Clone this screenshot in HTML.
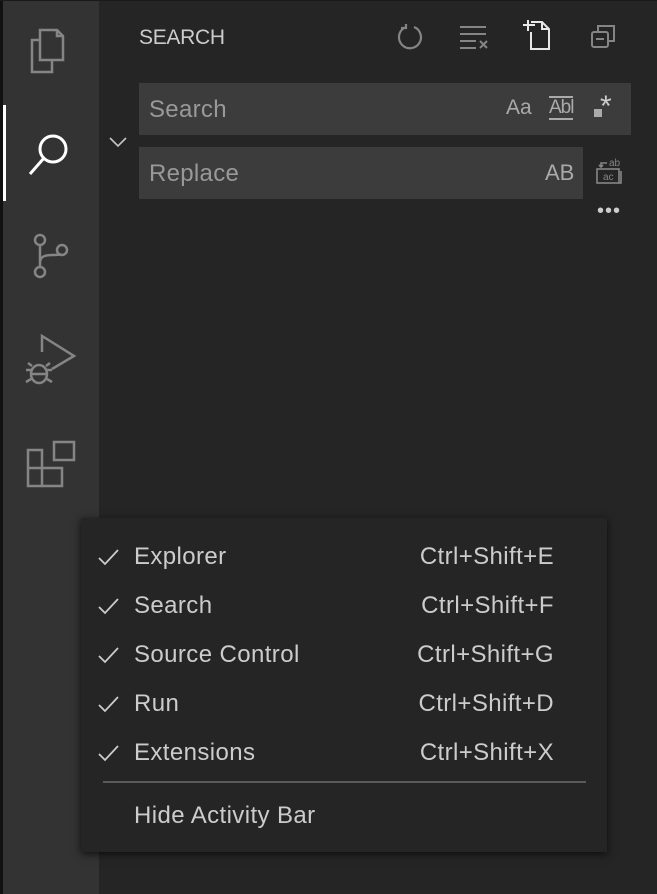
<!DOCTYPE html>
<html><head><meta charset="utf-8"><style>
*{margin:0;padding:0;box-sizing:border-box}
body{width:657px;height:894px;background:#252526;position:relative;overflow:hidden;font-family:"Liberation Sans",sans-serif;color:#ccc}
.ab{position:absolute;left:3px;top:0;width:96px;height:894px;background:#333}
.lb{position:absolute;left:0;top:0;width:3px;height:894px;background:#111}
.tb{position:absolute;left:0;top:0;width:657px;height:1px;background:#1a1a1a}
.ind{position:absolute;left:3px;top:105px;width:3px;height:96px;background:#fff}
svg{position:absolute}
.t{position:absolute;white-space:nowrap}
.box{position:absolute;background:#3c3c3c}
.menu{position:absolute;left:81px;top:518px;width:526px;height:334px;background:#252526;box-shadow:0 2px 8px rgba(0,0,0,.7)}
.it{position:absolute;left:0;width:526px;height:30px;font-size:24px;color:#ccc;letter-spacing:0.4px}
.it .l{position:absolute;left:53px;top:1px}
.it .r{position:absolute;right:53px;top:1px}
.it svg{left:16px;top:5px}
</style></head><body>
<div class="ab"></div><div class="lb"></div><div class="tb"></div><div class="ind"></div>
<svg width="60" height="60" style="left:22px;top:20px" fill="none" stroke="#858585" stroke-width="2.5"><path d="M18 10h17l6 6v24H18z M35 10v6h6"/><path d="M18 20h-8v32h20v-12"/></svg>
<svg width="60" height="60" style="left:22px;top:122px" fill="none" stroke="#fff" stroke-width="3"><circle cx="31" cy="27" r="13"/><path d="M22 36L8 52"/></svg>
<svg width="60" height="60" style="left:22px;top:228px" fill="none" stroke="#858585" stroke-width="2.5"><circle cx="18" cy="12" r="5"/><circle cx="18" cy="44" r="5"/><circle cx="40" cy="22" r="5"/><path d="M18 17v22M18 35c0-6 4-8 12-8 6 0 8-1 10-0"/></svg>
<svg width="60" height="60" style="left:22px;top:332px" fill="none" stroke="#858585" stroke-width="2.5"><path d="M20 20V4l32 20-22 13"/><ellipse cx="17" cy="42" rx="8" ry="9"/><path d="M9 42h16M4 38h5M25 38h5M4 50l5-3M30 50l-5-3M10 34l-4-3M24 34l4-3"/></svg>
<svg width="60" height="60" style="left:22px;top:436px" fill="none" stroke="#858585" stroke-width="2.5"><rect x="6" y="14" width="14" height="36"/><path d="M6 32h34v18H20"/><rect x="32" y="6" width="20" height="18"/></svg>
<div class="t" style="left:139px;top:26px;font-size:21px;color:#ccc;letter-spacing:-0.3px">SEARCH</div>
<svg width="30" height="30" style="left:396px;top:22px" fill="none" stroke="#858585" stroke-width="2.2"><path d="M8 6a11 11 0 1 0 10 -1"/><path d="M5 6h5V2"/></svg>
<svg width="34" height="30" style="left:458px;top:22px" fill="none" stroke="#858585" stroke-width="2"><path d="M2 5h26M2 12h26M2 19h16M2 26h16M22 19l7 7M29 19l-7 7"/></svg>
<svg width="34" height="34" style="left:521px;top:18px" fill="none" stroke="#e8e8e8" stroke-width="2"><path d="M10 4h11l7 7v20H10V14"/><path d="M21 4v7h7M2 7h12M7 2v11"/></svg>
<svg width="30" height="30" style="left:590px;top:22px" fill="none" stroke="#858585" stroke-width="2"><rect x="2" y="10" width="16" height="15" rx="2"/><path d="M8 10V4h16v15h-6M6 17h8"/></svg>
<svg width="24" height="16" style="left:107px;top:134px" fill="none" stroke="#c5c5c5" stroke-width="1.6"><path d="M3 4l8 8 8-8"/></svg>
<div class="box" style="left:139px;top:83px;width:492px;height:52px"></div>
<div class="t" style="left:149px;top:96px;font-size:24px;color:#999;letter-spacing:0.3px">Search</div>
<div class="t" style="left:506px;top:96px;font-size:21px;color:#aaa">Aa</div>
<div class="t" style="left:549px;top:96px;font-size:19px;color:#aaa;border-top:2px solid #aaa;border-bottom:2px solid #aaa;line-height:20px;letter-spacing:-1px">Abl</div>
<div style="position:absolute;left:594px;top:109px;width:8px;height:8px;background:#aaa"></div>
<div class="t" style="left:600px;top:90px;font-size:30px;color:#ccc">*</div>
<div class="box" style="left:139px;top:147px;width:444px;height:52px"></div>
<div class="t" style="left:149px;top:160px;font-size:24px;color:#999;letter-spacing:0.3px">Replace</div>
<div class="t" style="left:545px;top:160px;font-size:22px;color:#aaa">AB</div>
<svg width="30" height="30" style="left:595px;top:157px" fill="none" stroke="#858585" stroke-width="1.6"><rect x="2" y="12" width="22" height="14"/><text x="8" y="23" font-size="10" fill="#858585" stroke="none" font-family="Liberation Sans">ac</text><text x="14" y="9" font-size="10" fill="#858585" stroke="none" font-family="Liberation Sans">ab</text><path d="M12 6H6v4M4 8l2 2 2-2"/><path d="M26 14v12h-2"/></svg>
<div class="t" style="left:597px;top:200px;font-size:20px;color:#ccc;letter-spacing:1px">•••</div>
<div class="menu">
<div class="it" style="top:24px"><svg width="26" height="22" fill="none" stroke="#ccc" stroke-width="1.8"><path d="M2 11l6 6L21 3"/></svg><span class="l">Explorer</span><span class="r">Ctrl+Shift+E</span></div>
<div class="it" style="top:73px"><svg width="26" height="22" fill="none" stroke="#ccc" stroke-width="1.8"><path d="M2 11l6 6L21 3"/></svg><span class="l">Search</span><span class="r">Ctrl+Shift+F</span></div>
<div class="it" style="top:122px"><svg width="26" height="22" fill="none" stroke="#ccc" stroke-width="1.8"><path d="M2 11l6 6L21 3"/></svg><span class="l">Source Control</span><span class="r">Ctrl+Shift+G</span></div>
<div class="it" style="top:171px"><svg width="26" height="22" fill="none" stroke="#ccc" stroke-width="1.8"><path d="M2 11l6 6L21 3"/></svg><span class="l">Run</span><span class="r">Ctrl+Shift+D</span></div>
<div class="it" style="top:220px"><svg width="26" height="22" fill="none" stroke="#ccc" stroke-width="1.8"><path d="M2 11l6 6L21 3"/></svg><span class="l">Extensions</span><span class="r">Ctrl+Shift+X</span></div>
<div style="position:absolute;left:22px;top:263px;width:483px;height:2px;background:#5a5a5a"></div>
<div class="it" style="top:283px"><span class="l">Hide Activity Bar</span></div>
</div>
</body></html>
